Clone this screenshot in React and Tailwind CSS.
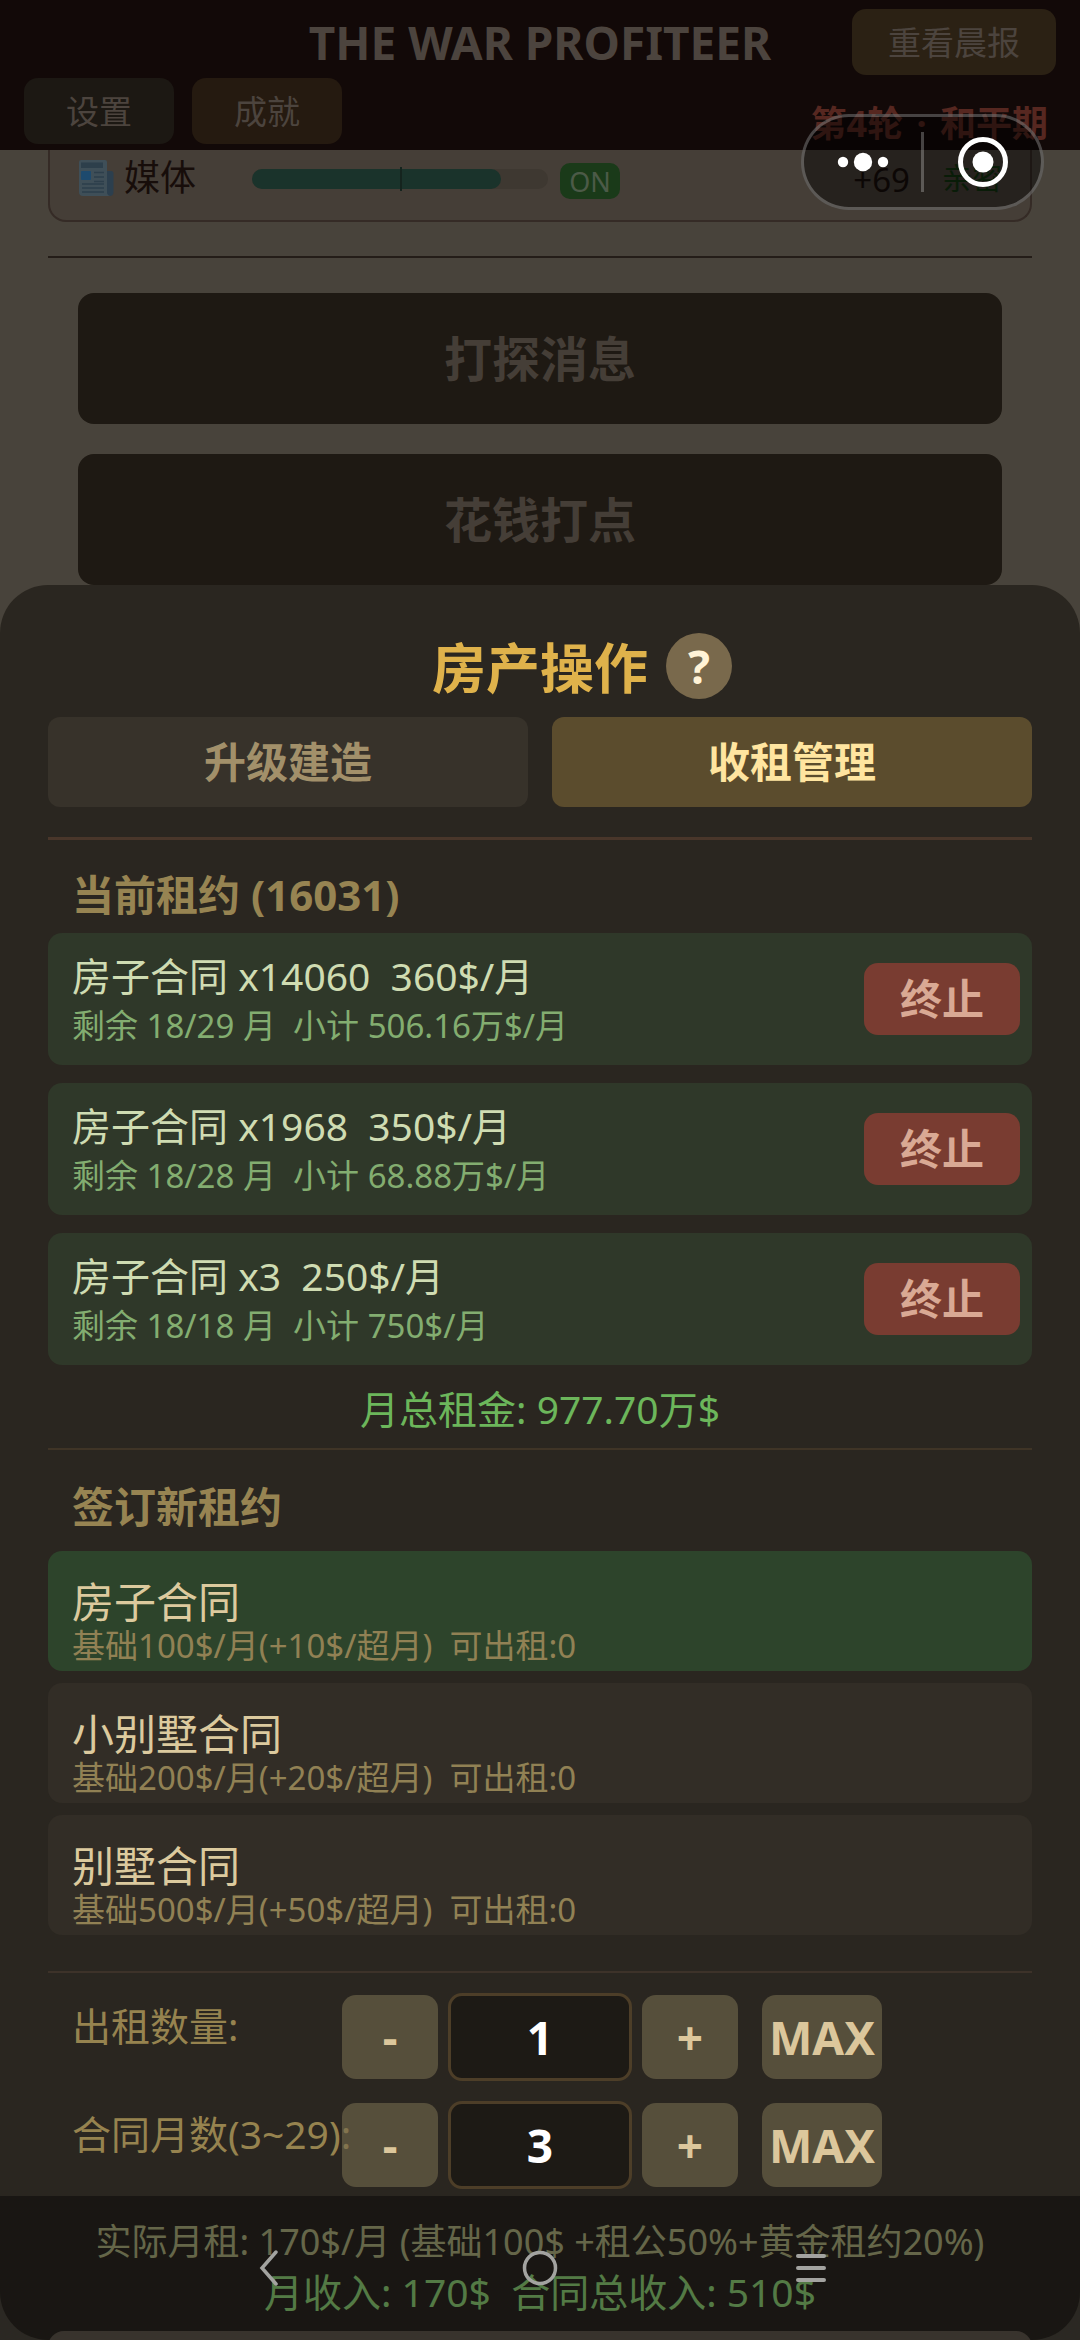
const leases = [
  { name: "房子合同 x14060  360$/月", detail: "剩余 18/29 月  小计 506.16万$/月" },
  { name: "房子合同 x1968  350$/月", detail: "剩余 18/28 月  小计 68.88万$/月" },
  { name: "房子合同 x3  250$/月", detail: "剩余 18/18 月  小计 750$/月" },
];

const contracts = [
  { name: "房子合同", detail: "基础100$/月(+10$/超月)  可出租:0", active: true },
  { name: "小别墅合同", detail: "基础200$/月(+20$/超月)  可出租:0", active: false },
  { name: "别墅合同", detail: "基础500$/月(+50$/超月)  可出租:0", active: false },
];

function NewspaperIcon() {
  return (
    <svg viewBox="0 0 36 38" className="h-[38px] w-9 shrink-0" aria-hidden="true">
      <path d="M28 12h5a2.500 2.500 0 0 1 2.500 2.500V33a4 4 0 0 1-8 0z" fill="#2c3f4e" />
      <path d="M3 1h24a2 2 0 0 1 2 2v30a4 4 0 0 0 3 4H5a4 4 0 0 1-4-4V3a2 2 0 0 1 2-2z" fill="#3f4f58" />
      <rect x="3" y="3.500" width="22" height="5.500" fill="#2d3f4b" />
      <rect x="3" y="12" width="10" height="9" rx="1" fill="#1d4a6e" />
      <path d="M16 13.500h10M16 18h10M16 22.500h10M4 25h22M4 29h22M4 33h22" stroke="#2d3f4b" strokeWidth="1.500" />
    </svg>
  );
}

function Header() {
  return (
    <header className="flex h-[150px] flex-col gap-[3px] bg-[#120908] px-6 pt-[9px] text-[33px] leading-none text-[#4c443e]">
      <div className="grid grid-cols-[1fr_auto_1fr] items-center">
        <h1 className="col-start-2 text-[46px] font-bold">THE WAR PROFITEER</h1>
        <button className="h-[66px] w-[204px] justify-self-end rounded-[14px] bg-[#2b2114]">重看晨报</button>
      </div>
      <div className="flex items-start gap-[18px]">
        <button className="h-[66px] w-[150px] rounded-[14px] bg-[#1c1813]">设置</button>
        <button className="h-[66px] w-[150px] rounded-[14px] bg-[#251a10]">成就</button>
        <p className="ml-auto pt-7 pr-2 text-4xl leading-none font-bold text-[#562720]">
          第4轮 <span className="mx-1">·</span> 和平期
        </p>
      </div>
    </header>
  );
}

function MediaRow() {
  return (
    <div className="flex h-[72px] items-start rounded-b-[18px] border-x-2 border-b-2 border-[#352b26] bg-[#453e37] px-7 pt-[9px] text-4xl leading-none text-[#170d0a]">
      <div className="flex w-[174px] items-center gap-[10px]">
        <NewspaperIcon />
        <span>媒体</span>
      </div>
      <div className="relative mt-[10px] h-5 w-[296px] rounded-full bg-[#3e3831]">
        <div className="h-full rounded-full bg-[#1a332b]" style={{ width: "84%" }} />
        <div className="absolute -inset-y-[2px] left-1/2 w-[2px] bg-[#15241e]" />
      </div>
      <span className="mt-1 ml-3 flex h-9 w-[60px] items-center justify-center rounded-[10px] bg-[#1a3a19] text-[27px] leading-none text-[#4c5a48]">
        ON
      </span>
      <span className="ml-auto pt-1 text-[33px] leading-none">+69</span>
      <span className="ml-8 pt-1 text-[30px] leading-none text-[#12330f]">亲密</span>
    </div>
  );
}

function MenuButton({ children }) {
  return (
    <button className="h-[131px] w-full rounded-[16px] bg-[#1e1913] text-5xl leading-none font-bold text-[#453e37]">
      {children}
    </button>
  );
}

function Capsule() {
  return (
    <div className="absolute top-[114px] right-9 z-20 flex h-[96px] w-[243px] items-center rounded-full border-[3px] border-white/25 bg-black/45">
      <button className="flex h-full flex-1 items-center justify-center" aria-label="更多">
        <svg viewBox="0 0 52 20" className="h-5 w-[52px]" fill="#fff">
          <circle cx="6" cy="10" r="5.200" />
          <circle cx="26" cy="10" r="9.200" />
          <circle cx="46" cy="10" r="5.200" />
        </svg>
      </button>
      <div className="h-[60px] w-[3px] bg-white/25" />
      <button className="flex h-full flex-1 items-center justify-center" aria-label="关闭">
        <svg viewBox="0 0 52 52" className="size-[52px]">
          <circle cx="26" cy="26" r="22.500" fill="none" stroke="#fff" strokeWidth="5" />
          <circle cx="26" cy="26" r="10.500" fill="#fff" />
        </svg>
      </button>
    </div>
  );
}

function Stepper({ id, label, value }) {
  const button = "h-[84px] shrink-0 rounded-[14px] bg-[#746a4e]/60 text-[46px] leading-none font-bold text-[#dcc79c]";
  return (
    <div className="flex items-center">
      <label htmlFor={id} className="w-[270px] shrink-0 pb-6 text-[39px] leading-none whitespace-nowrap text-[#96834f]">
        {label}
      </label>
      <button className={`w-24 ${button}`} aria-label={`${label} 减少`}>-</button>
      <input
        id={id}
        defaultValue={value}
        className="mx-[10px] h-[88px] w-[184px] shrink-0 rounded-[14px] border-[3px] border-[#4d3e28] bg-[#1d1a15] text-center text-[46px] leading-none font-bold text-white"
      />
      <button className={`w-24 ${button}`} aria-label={`${label} 增加`}>+</button>
      <button className={`ml-6 w-[120px] ${button}`}>MAX</button>
    </div>
  );
}

function Sheet() {
  return (
    <section className="absolute inset-x-0 bottom-0 z-10 flex h-[75vh] flex-col overflow-hidden rounded-[48px] bg-[#29251f]/97 px-12 pt-12">
      <div className="grid shrink-0 grid-cols-[1fr_auto_1fr] items-center">
        <h2 className="col-start-2 pt-1 text-[54px] leading-none font-bold text-[#dfb24b]">房产操作</h2>
        <button className="ml-[18px] size-[66px] rounded-full bg-[#79694c] text-[46px] leading-none font-bold text-[#fff3d6]" aria-label="帮助">
          ?
        </button>
      </div>

      <div className="mt-[18px] grid shrink-0 grid-cols-2 gap-6 text-[42px] leading-none font-bold">
        <button className="h-[90px] rounded-[12px] bg-[#37322a] text-[#a2906a]">升级建造</button>
        <button className="h-[90px] rounded-[12px] bg-[#5b4c2d] text-[#ffe5a0]">收租管理</button>
      </div>

      <hr className="mt-[30px] shrink-0 border-t-[3px] border-[#49362a]" />

      <h3 className="mt-[34px] shrink-0 px-6 text-[42px] leading-[42px] font-bold text-[#978452]">当前租约 (16031)</h3>
      <ul className="mt-[17px] flex shrink-0 flex-col gap-[18px]">
        {leases.map((lease) => (
          <li key={lease.name} className="flex h-[132px] items-center justify-between rounded-[14px] bg-[#2f3829] pr-3 pl-6">
            <div className="pt-1 whitespace-pre">
              <p className="text-[39px] leading-[50px] text-[#cfdcb2]">{lease.name}</p>
              <p className="text-[33px] leading-[50px] text-[#83ad70]">{lease.detail}</p>
            </div>
            <button className="h-[72px] w-[156px] rounded-[14px] bg-[#793c31] text-[42px] leading-none font-bold text-[#d9a994]">
              终止
            </button>
          </li>
        ))}
      </ul>

      <p className="mt-[19px] shrink-0 text-center text-[39px] leading-[50px] text-[#6cb65b]">月总租金: 977.70万$</p>
      <hr className="mt-[14px] shrink-0 border-t-2 border-[#3f3426]" />

      <h3 className="mt-9 shrink-0 px-6 text-[42px] leading-[42px] font-bold text-[#978452]">签订新租约</h3>
      <div className="mt-[23px] flex shrink-0 flex-col gap-3">
        {contracts.map((contract) => (
          <button
            key={contract.name}
            aria-pressed={contract.active}
            className={`flex h-[120px] flex-col items-start justify-end rounded-[14px] px-6 pb-1 text-left whitespace-pre ${contract.active ? "bg-[#2d442b]" : "bg-[#322d26]"}`}
          >
            <span className="text-[42px] leading-[46px] text-[#dcca9e]">{contract.name}</span>
            <span className="text-[33px] leading-[42px] text-[#918154]">{contract.detail}</span>
          </button>
        ))}
      </div>

      <hr className="mt-9 shrink-0 border-t-2 border-[#3d3229]" />

      <div className="mt-5 flex shrink-0 flex-col gap-5 pl-6">
        <Stepper id="rent-count" label="出租数量:" value="1" />
        <Stepper id="rent-months" label="合同月数(3~29):" value="3" />
      </div>

      <div className="mt-7 shrink-0 text-center whitespace-pre">
        <p className="text-4xl leading-[50px] text-[#a8ab7b]">实际月租: 170$/月 (基础100$ +租公50%+黄金租约20%)</p>
        <p className="text-[39px] leading-[50px] text-[#8acb74]">月收入: 170$  合同总收入: 510$</p>
      </div>
      <button className="mt-[14px] h-24 shrink-0 rounded-[16px] bg-[#5e564c]" aria-label="签约" />
    </section>
  );
}

function SystemBar() {
  return (
    <nav className="absolute inset-x-0 bottom-0 z-30 grid h-36 grid-cols-[1fr_auto_auto_auto_1fr] items-center bg-black/40">
      <button className="col-start-2 flex w-[271px] justify-center" aria-label="返回">
        <svg viewBox="0 0 20 36" className="h-9 w-5" fill="none" stroke="#a3a3a0" strokeWidth="3.500" strokeLinecap="round">
          <path d="M17 2 3 18l14 16" />
        </svg>
      </button>
      <button className="flex w-[271px] justify-center" aria-label="主页">
        <svg viewBox="0 0 36 36" className="size-9" fill="none" stroke="#a3a3a0" strokeWidth="3.500">
          <circle cx="18" cy="18" r="15.500" />
        </svg>
      </button>
      <button className="flex w-[271px] justify-center" aria-label="最近任务">
        <svg viewBox="0 0 30 30" className="size-[30px]" stroke="#a3a3a0" strokeWidth="4" strokeLinecap="round">
          <path d="M2 3h26M2 15h26M2 27h26" />
        </svg>
      </button>
    </nav>
  );
}

export default function App() {
  return (
    <div className="relative h-screen overflow-hidden bg-[#48433b] font-['Noto_Sans','Noto_Sans_CJK_SC',sans-serif]">
      <Header />
      <main className="px-12">
        <MediaRow />
        <hr className="mt-[34px] border-t-2 border-[#241d18]" />
        <div className="mt-[35px] flex flex-col gap-[30px] px-[30px]">
          <MenuButton>打探消息</MenuButton>
          <MenuButton>花钱打点</MenuButton>
        </div>
      </main>
      <Capsule />
      <Sheet />
      <SystemBar />
    </div>
  );
}
